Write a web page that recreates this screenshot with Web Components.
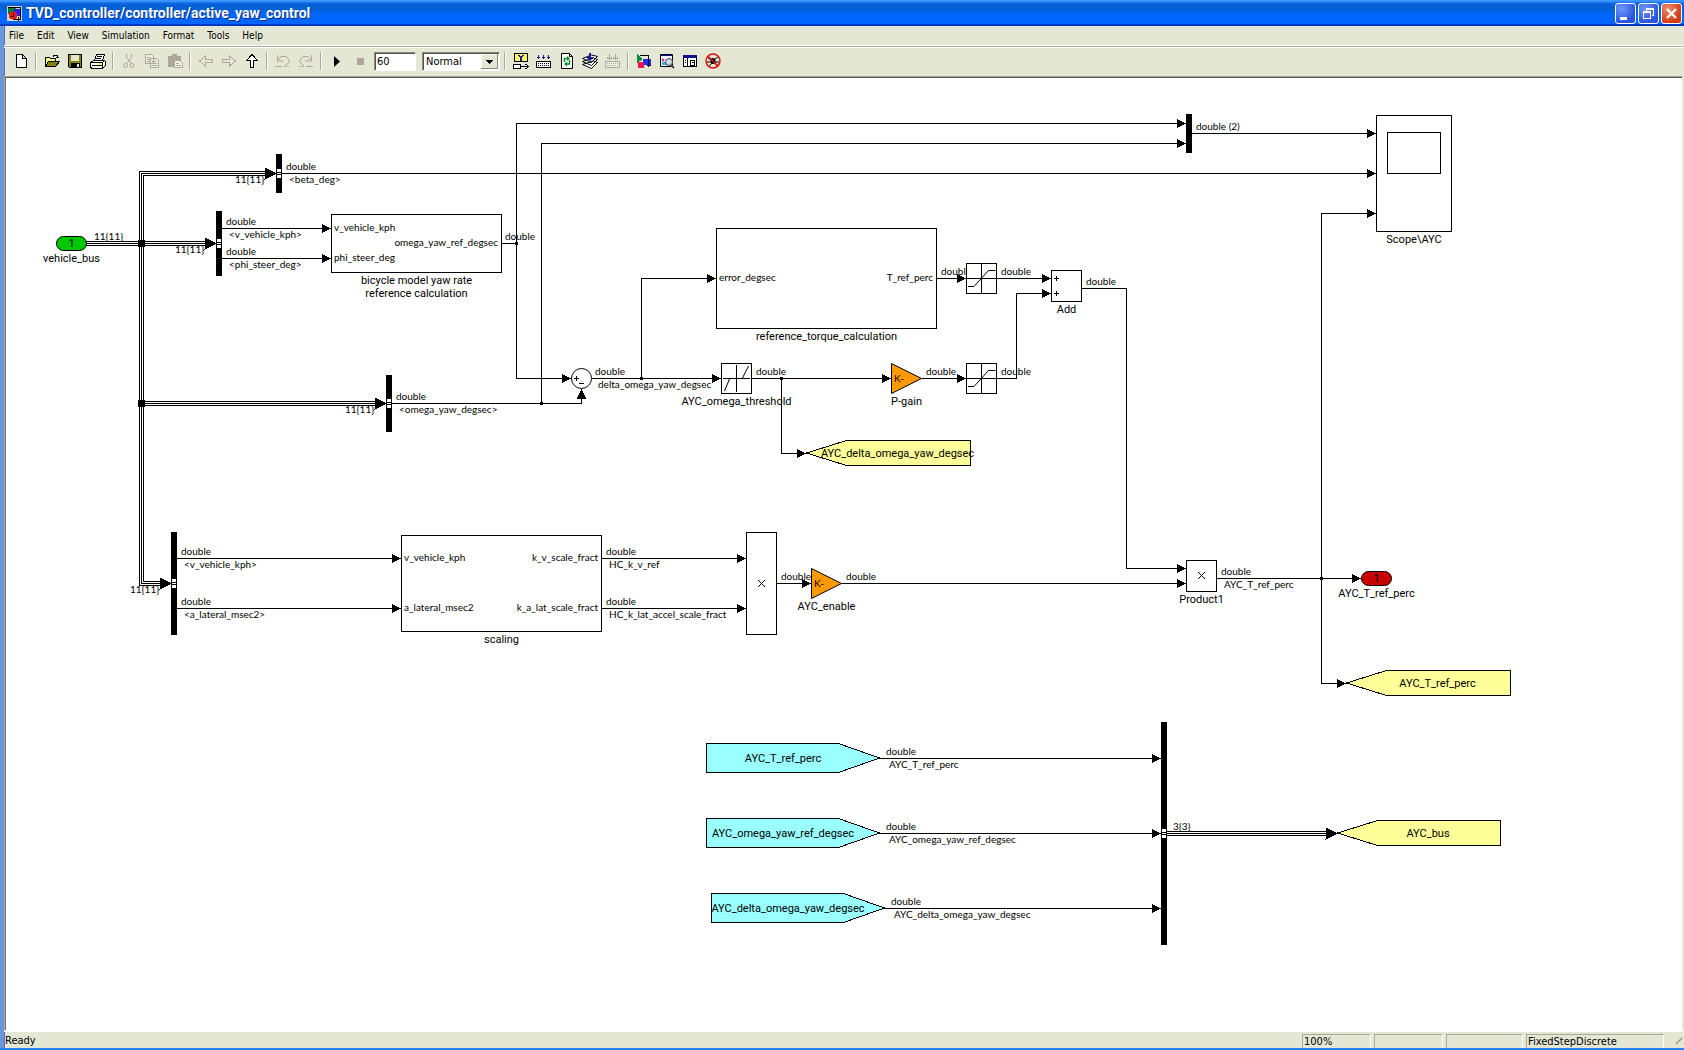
<!DOCTYPE html>
<html lang="en">
<head>
<meta charset="utf-8">
<title>TVD_controller/controller/active_yaw_control</title>
<style>
html, body { height: 100%; margin: 0; }
body { background: #e5e7d5; font-family: "DejaVu Sans Condensed", "DejaVu Sans", sans-serif; font-size: 10px; color: #000; overflow: hidden; }
</style>
</head>
<body>
<model-window>
  <title-bar slot="title">TVD_controller/controller/active_yaw_control</title-bar>
  <menu-bar slot="menu"></menu-bar>
  <tool-bar slot="tools"></tool-bar>
  <sim-canvas>
    <sim-wires></sim-wires>

    <sim-signal x="94" y="243" type="11{11}"></sim-signal>
    <sim-signal x="175" y="243" name="11{11}" flush></sim-signal>
    <sim-signal x="235" y="173" name="11{11}" flush></sim-signal>
    <sim-signal x="345" y="403" name="11{11}" flush></sim-signal>
    <sim-signal x="130" y="583" name="11{11}" flush></sim-signal>
    <sim-signal x="1173" y="833" type="3{3}"></sim-signal>
    <sim-signal x="286" y="173" type="double" name="&lt;beta_deg&gt;"></sim-signal>
    <sim-signal x="226" y="228" type="double" name="&lt;v_vehicle_kph&gt;"></sim-signal>
    <sim-signal x="226" y="258" type="double" name="&lt;phi_steer_deg&gt;"></sim-signal>
    <sim-signal x="505" y="243" type="double"></sim-signal>
    <sim-signal x="396" y="403" type="double" name="&lt;omega_yaw_degsec&gt;"></sim-signal>
    <sim-signal x="595" y="378" type="double" name="delta_omega_yaw_degsec"></sim-signal>
    <sim-signal x="941" y="278" type="double"></sim-signal>
    <sim-signal x="1001" y="278" type="double"></sim-signal>
    <sim-signal x="756" y="378" type="double"></sim-signal>
    <sim-signal x="926" y="378" type="double"></sim-signal>
    <sim-signal x="1001" y="378" type="double"></sim-signal>
    <sim-signal x="1086" y="288" type="double"></sim-signal>
    <sim-signal x="1196" y="133" type="double (2)"></sim-signal>
    <sim-signal x="181" y="558" type="double" name="&lt;v_vehicle_kph&gt;"></sim-signal>
    <sim-signal x="181" y="608" type="double" name="&lt;a_lateral_msec2&gt;"></sim-signal>
    <sim-signal x="606" y="558" type="double" name="HC_k_v_ref"></sim-signal>
    <sim-signal x="606" y="608" type="double" name="HC_k_lat_accel_scale_fract"></sim-signal>
    <sim-signal x="781" y="583" type="double"></sim-signal>
    <sim-signal x="846" y="583" type="double"></sim-signal>
    <sim-signal x="1221" y="578" type="double" name="AYC_T_ref_perc"></sim-signal>
    <sim-signal x="886" y="758" type="double" name="AYC_T_ref_perc"></sim-signal>
    <sim-signal x="886" y="833" type="double" name="AYC_omega_yaw_ref_degsec"></sim-signal>
    <sim-signal x="891" y="908" type="double" name="AYC_delta_omega_yaw_degsec"></sim-signal>

    <sim-block kind="inport" x="56" y="236" w="31" h="15" name="vehicle_bus">1</sim-block>
    <sim-block kind="outport" x="1361" y="571" w="31" h="15" name="AYC_T_ref_perc">1</sim-block>
    <sim-block kind="busbar" x="276" y="154" w="6" h="39" port="19"></sim-block>
    <sim-block kind="busbar" x="216" y="211" w="6" h="65" port="32"></sim-block>
    <sim-block kind="busbar" x="386" y="375" w="6" h="57" port="28"></sim-block>
    <sim-block kind="busbar" x="171" y="532" w="6" h="103" port="51"></sim-block>
    <sim-block kind="busbar" x="1186" y="114" w="6" h="39"></sim-block>
    <sim-block kind="busbar" x="1161" y="722" w="6" h="223" port="111"></sim-block>
    <sim-block kind="subsystem" x="331" y="214" w="171" h="59" name="bicycle model yaw rate|reference calculation">
      <sim-port y="14">v_vehicle_kph</sim-port><sim-port y="44">phi_steer_deg</sim-port><sim-port y="29" out>omega_yaw_ref_degsec</sim-port>
    </sim-block>
    <sim-block kind="subsystem" x="716" y="228" w="221" h="101" name="reference_torque_calculation">
      <sim-port y="50">error_degsec</sim-port><sim-port y="50" out>T_ref_perc</sim-port>
    </sim-block>
    <sim-block kind="subsystem" x="401" y="535" w="201" h="97" name="scaling">
      <sim-port y="23">v_vehicle_kph</sim-port><sim-port y="73">a_lateral_msec2</sim-port>
      <sim-port y="23" out>k_v_scale_fract</sim-port><sim-port y="73" out>k_a_lat_scale_fract</sim-port>
    </sim-block>
    <sim-block kind="sum" x="571" y="368" w="21" h="21"></sim-block>
    <sim-block kind="deadzone" x="721" y="363" w="31" h="31" name="AYC_omega_threshold"></sim-block>
    <sim-block kind="saturation" x="966" y="263" w="31" h="31"></sim-block>
    <sim-block kind="saturation" x="966" y="363" w="31" h="31"></sim-block>
    <sim-block kind="gain" x="891" y="363" w="31" h="31" name="P-gain">K-</sim-block>
    <sim-block kind="gain" x="811" y="568" w="31" h="31" name="AYC_enable">K-</sim-block>
    <sim-block kind="add" x="1051" y="270" w="31" h="32" name="Add"></sim-block>
    <sim-block kind="product" x="746" y="532" w="31" h="103"></sim-block>
    <sim-block kind="product" x="1186" y="560" w="31" h="32" name="Product1"></sim-block>
    <sim-block kind="scope" x="1376" y="115" w="76" h="117" name="Scope\AYC"></sim-block>
    <sim-block kind="goto" x="806" y="440" w="165" h="26">AYC_delta_omega_yaw_degsec</sim-block>
    <sim-block kind="goto" x="1346" y="670" w="165" h="26">AYC_T_ref_perc</sim-block>
    <sim-block kind="goto" x="1337" y="820" w="164" h="26">AYC_bus</sim-block>
    <sim-block kind="from" x="706" y="743" w="174" h="30">AYC_T_ref_perc</sim-block>
    <sim-block kind="from" x="706" y="818" w="174" h="30">AYC_omega_yaw_ref_degsec</sim-block>
    <sim-block kind="from" x="711" y="893" w="174" h="30">AYC_delta_omega_yaw_degsec</sim-block>
  </sim-canvas>
  <status-bar slot="status"></status-bar>
</model-window>

<script>
const define = (name, html, setup) => customElements.define(name, class extends HTMLElement {
  connectedCallback() {
    if (this.shadowRoot) return;
    const root = this.attachShadow({ mode: 'open' });
    root.innerHTML = html;
    if (setup) setup(this, root);
  }
});

define('model-window', `<style>
:host { display: flex; flex-direction: column; height: 100vh; box-sizing: border-box; border-bottom: 2px solid #2a80ee; background: #e5e7d5; }
.body { flex: 1; min-height: 0; display: flex; flex-direction: column; border-left: 4px solid #6699d8; box-shadow: inset 1px 0 #6a60d0; }
main { flex: 1; min-height: 0; display: flex; margin-right: 1px; border: 1px solid #aca899; border-right-color: #e5e7d5; border-bottom-color: #fff; }
::slotted(sim-canvas) { flex: 1; }
</style>
<slot name="title"></slot>
<div class="body">
<slot name="menu"></slot><slot name="tools"></slot>
<main><slot></slot></main>
<slot name="status"></slot></div>`);

define('title-bar', `<style>
:host { display: flex; align-items: center; height: 26px; box-sizing: border-box; padding: 0 2px 0 7px; gap: 4px; color: #fff;
 background: linear-gradient(#3a93ff 0 2px, #1673ee 2px 3px, #0a5fd8 4px, #0061d2 9px, #0066ff 14px 24px, #0038c4 24px); }
h1 { flex: 1; margin: 0; font: bold 14px/20px Roboto, sans-serif; text-shadow: 1px 1px #0a2a80; }
.icon { width: 15px; height: 15px; display: block; }
div { display: flex; gap: 2px; }
button { width: 21px; height: 21px; padding: 0; border: 1px solid #fff; border-radius: 3px; background: radial-gradient(circle at 30% 25%, #6f97f8, #2c55dd 70%); }
button.close { background: radial-gradient(circle at 30% 25%, #ee8d70, #d43c12 70%); }
button svg { display: block; width: 19px; height: 19px; }
</style>
<svg class="icon" viewBox="0 0 15 15" shape-rendering="crispEdges"><path fill="#d6d3c4" d="M0 0h15v15H0z"/><path fill="#0a7a2a" d="M1 1h6l4 4-3 3H1z"/><path fill="#2222e8" d="M7 3h6v7H7z"/><path stroke="#000" fill="none" d="M1 1.5h12.500v12M6 13.500h8M11.500 11v4"/><circle cx="6" cy="9.500" r="4" fill="#f01818"/><path stroke="#000" fill="none" d="M6.500 7v3H4"/></svg>
<h1><slot></slot></h1>
<div>
<button aria-label="Minimize"><svg viewBox="0 0 19 19"><path fill="#fff" d="M4 13h7v3H4z"/></svg></button>
<button aria-label="Restore"><svg viewBox="0 0 19 19" shape-rendering="crispEdges" fill="#fff"><path d="M4 7h8v8H4zM5 9v5h6v-5z" fill-rule="evenodd"/><path d="M7 4h8v8h-2V11h1V6H8v1H7z"/></svg></button>
<button class="close" aria-label="Close"><svg viewBox="0 0 19 19"><path stroke="#fff" stroke-width="2.400" d="M5 5l9 9M14 5l-9 9"/></svg></button>
</div>`);

define('menu-bar', `<style>
:host { display: block; height: 19px; border-bottom: 1px solid #fff; }
nav { display: flex; gap: 13px; padding: 0 5px; }
button { all: unset; font: 10px/19px "DejaVu Sans Condensed", "DejaVu Sans", sans-serif; }
</style><nav></nav>`, (el, root) => {
  root.querySelector('nav').innerHTML = ['File', 'Edit', 'View', 'Simulation', 'Format', 'Tools', 'Help'].map(t => `<button>${t}</button>`).join('');
});

const off = '#aca899';
const icons = {
  'New': '<path fill="#fff" stroke="#000" d="M3.500 1.500h6l4 4v9h-10zM9.500 1.500v4h4"/>',
  'Open': '<path fill="#ffff80" stroke="#000" d="M1.500 13.500v-9h4l1 1h5v3"/><path fill="#848400" stroke="#000" d="M1.500 13.500l3-5h11l-4 5z"/><path stroke="#000" fill="none" d="M9 3.500l1-1h3l1 2M12 4.500h3"/>',
  'Save': '<path fill="#848400" stroke="#000" d="M1.500 1.500h13v13h-12l-1-1z"/><path fill="#e5e7d5" d="M4 2h8v6H4z"/><path d="M4 10h9v5H4z"/><path fill="#e5e7d5" d="M10 11h2v3h-2z"/>',
  'Print': '<path fill="#fff" stroke="#000" d="M4.500 7.500l2-6h8l-2 6"/><path stroke="#000" d="M7 3.500h5M6 5.500h5"/><path fill="#fff" stroke="#000" d="M.5 9.500l3-2h11l1 1v4l-3 2.500H1.500l-1-1z"/><path stroke="#000" fill="none" d="M1 9.500h11v5M12 9.500l3-2M2 12.500h10"/><path fill="#ffff30" d="M8 10h3v2H8z"/>',
  'Cut': `<path stroke="${off}" fill="none" d="M5.500 1v3l5 7M10.500 1v3l-5 7"/><circle cx="4.500" cy="12.500" r="2" stroke="${off}" fill="none"/><circle cx="11" cy="12.500" r="2" stroke="${off}" fill="none"/>`,
  'Copy': `<path fill="#eeefe2" stroke="${off}" d="M1.500 1.500h6l2 2v7h-8zM6.500 5.500h6l2 2v7h-8z"/><path stroke="${off}" d="M3 4.500h3M3 6.500h3M3 8.500h3M8 8.500h4M8 10.500h5M8 12.500h5"/>`,
  'Paste': `<path fill="${off}" d="M1 3h4V1h5v2h4v11H1z"/><path fill="#f4f4ea" stroke="${off}" d="M7.500 7.500h5l3 3v4h-8z"/><path stroke="${off}" d="M9 10.500h3M9 12.500h5M4 4.500h7"/>`,
  'Back': `<path fill="none" stroke="${off}" d="M14.500 6.500H7.500V3L1.500 8l6 5V9.500h7z"/>`,
  'Forward': `<path fill="none" stroke="${off}" d="M1.500 6.500h7V3l6 5-6 5V9.500h-7z"/>`,
  'Up': '<path fill="#fff" stroke="#000" d="M6.500 14.500v-7h-4l5.500-6 5.500 6h-4v7z"/>',
  'Undo': `<path fill="none" stroke="${off}" d="M2.500 2v6h6M3 7.500l3-4h5l3 3v3l-4 3"/><path stroke="${off}" stroke-dasharray="2 1" d="M9 13.500h6"/><path stroke="${off}" d="M0 13.500h7"/>`,
  'Redo': `<path fill="none" stroke="${off}" d="M13.500 2v6h-6M13 7.500l-3-4H5l-3 3v3l4 3"/><path stroke="${off}" stroke-dasharray="2 1" d="M1 13.500h6"/><path stroke="${off}" d="M8 13.500h7"/>`,
  'Start': '<path d="M5 3l6 5.500L5 14z"/>',
  'Stop': `<path fill="${off}" d="M5 5h7v7H5z"/>`,
  'Highlight library': '<path fill="#ffff60" stroke="#000" d="M1.500.5h13v8h-13z"/><path fill="none" stroke="#1a1aa0" stroke-width="1.500" d="M5.500 2L8 4.500 10.500 2M8 4v4"/><path fill="#fff" stroke="#000" d="M.5 11.500h7v4h-7z"/><path stroke="#000" fill="none" d="M7 13.500h8M12.500 11l3 2.500-3 2.500"/>',
  'Build': '<path stroke="#1a1a90" fill="none" d="M2.500 2v4M7.500 2v4M12.500 2v4M1 4.500h3M6 4.500h3M11 4.500h3"/><path stroke="#000" fill="#fff" d="M.5 8.500h14v6H.5z"/><path stroke="#000" stroke-dasharray="1 1" d="M2 10.500h12M2 12.500h12"/>',
  'Refresh': '<path fill="#fff" stroke="#000" d="M2.500.5h8l3 3v12h-11zM10.500.5v3h3"/><path fill="none" stroke="#0a8a2a" stroke-width="1.500" d="M5.500 9V5.500H9M10.500 7v4H7"/><path fill="#0a8a2a" d="M8 3l3 2.500L8 8zM8 8.500L5 11l3 2.500z"/>',
  'Update diagram': '<path fill="#fff" stroke="#000" d="M.5 11.500l9 4 6-6-4-1.500zM.5 8.500l9 4 6-6-4-1.500zM.5 5.500l9 4 6-6-6-1.500z"/><path stroke="#1a1aa0" stroke-width="2" d="M8 0v5"/><path fill="#1a1aa0" d="M4 4h8L8 8z"/>',
  'Build subsystem': `<path stroke="${off}" fill="none" d="M4.500 1v5M10.500 1v5M2 4.500l2.500 2L7 4.500M8 4.500l2.500 2 2.500-2"/><path stroke="${off}" fill="#eeefe2" d="M.5 8.500h14v6H.5z"/><path stroke="${off}" stroke-dasharray="1 1" d="M2 10.500h12M2 12.500h12"/>`,
  'Library browser': '<path fill="#0a8a3a" d="M1 1l6 5-6 4z"/><path fill="#1a30ee" d="M7 6h8v6H7z"/><path stroke="#000" fill="none" d="M4 2.500h8.500v11M11 12.500h4"/><circle cx="5" cy="12" r="3.500" fill="#f0105a"/>',
  'Model explorer': '<path fill="#fff" stroke="#000" d="M1.500 1.500h12v12h-12z"/><path fill="#10108a" d="M2 2h11v1H2z"/><path fill="#d020b0" d="M3 5l3 2-3 2z"/><path fill="#20b8e0" d="M3 9h4v3H3z"/><circle cx="10" cy="9" r="3.500" fill="#c8dce0" stroke="#445"/><path stroke="#445" stroke-width="2" d="M12 12l3 3"/>',
  'Model browser': '<path fill="#fff" stroke="#000" d="M1.500 2.500h13v11h-13z"/><path fill="#10108a" d="M1 2h14v3H1z"/><path stroke="#000" fill="none" d="M5.500 5v8M3 7.500h1M3 9.500h1M8.500 7.500h4v5h-4zM10 9.500h3"/>',
  'Debug': '<path stroke="#000" fill="none" d="M3 5l3 2M13 4l-3 2M2 9h12M4 13l3-3M12 13l-2-3"/><ellipse cx="8" cy="8" rx="2.500" ry="3"/><circle cx="8" cy="8" r="7" fill="none" stroke="#e01010" stroke-width="1.500"/><path stroke="#e01010" stroke-width="1.500" d="M3 3l10 10"/>'
};
define('tool-button', `<style>
:host { display: block; }
button { all: unset; display: grid; place-items: center; width: 23px; height: 23px; }
svg { width: 16px; height: 16px; }
</style><button></button>`, (el, root) => {
  const b = root.querySelector('button'), n = el.getAttribute('icon');
  b.setAttribute('aria-label', n);
  const smooth = /Undo|Redo|Cut|Debug|Model explorer|Start|Update|Refresh/.test(n) ? 'auto' : 'crispEdges';
  b.innerHTML = `<svg viewBox="0 0 16 16" shape-rendering="${smooth}">${icons[n]}</svg>`;
});

define('tool-bar', `<style>
:host { display: flex; align-items: center; height: 30px; box-sizing: border-box; padding: 0 5px 1px; border-top: 1px solid #aca899; box-shadow: inset 0 1px #fff; }
i { width: 1px; height: 18px; margin: 0 4px 0 3px; background: #aca899; box-shadow: 1px 0 #fff; flex: none; box-sizing: border-box; }
input, .pick { box-sizing: border-box; height: 19px; border: 1px solid; border-color: #8a887a #fff #fff #8a887a; box-shadow: inset 1px 1px #55544c; background: #fff; }
input, select { font: 11px/15px "DejaVu Sans Condensed", "DejaVu Sans", sans-serif; color: #000; border-radius: 0; }
input { width: 42px; margin: 0 6px 0 3px; padding: 0 2px; outline: 0; }
.pick { display: grid; width: 78px; margin-right: 1px; padding: 1px; }
select { grid-area: 1/1; appearance: none; border: 0; background: none; padding: 0 2px; min-width: 0; outline: 0; }
.pick svg { grid-area: 1/1; justify-self: end; width: 17px; height: 15px; pointer-events: none; }
</style>`, (el, root) => {
  const group = names => names.map(n => `<tool-button icon="${n}"></tool-button>`).join('');
  root.innerHTML += [['New'], ['Open', 'Save', 'Print'], ['Cut', 'Copy', 'Paste'], ['Back', 'Forward', 'Up'], ['Undo', 'Redo'], ['Start', 'Stop']].map(group).join('<i></i>')
    + '<input aria-label="Stop time" value="60"><span class="pick"><select aria-label="Simulation mode"><option>Normal</option><option>Accelerator</option></select>'
    + '<svg viewBox="0 0 17 15" shape-rendering="crispEdges"><path fill="#e5e7d5" d="M0 0h17v15H0z"/><path fill="none" stroke="#8a887a" d="M0 14.500h16.500V0"/><path fill="none" stroke="#fff" d="M.5 14V.5H16"/><path d="M5 6h7L8.500 10z"/></svg></span><i></i>'
    + group(['Highlight library', 'Build', 'Refresh', 'Update diagram', 'Build subsystem']) + '<i></i>'
    + group(['Library browser', 'Model explorer', 'Model browser', 'Debug']);
});

define('status-bar', `<style>
:host { display: flex; gap: 3px; height: 17px; box-sizing: border-box; padding: 2px 0 0 1px; border-top: 1px solid #fff; font: 11px/14px "DejaVu Sans Condensed", "DejaVu Sans", sans-serif; }
:host > span { flex: 1; }
div { width: 69px; box-sizing: border-box; border: 1px solid; border-color: #aca899 #fff transparent #aca899; padding: 0 1px; line-height: 13px; }
.mid { width: 77px; } .solver { width: 138px; }
svg { width: 17px; height: 14px; }
</style><span>Ready</span><div>100%</div><div></div><div class="mid"></div><div class="solver">FixedStepDiscrete</div>
<svg viewBox="0 0 17 14"><path stroke="#aca899" stroke-width="2" d="M9 10l6-6"/></svg>`);

/* The model layer keeps window coordinates, so it is shifted by the canvas origin. */
define('sim-canvas', `<style>
:host { display: block; background: #fff; position: relative; overflow: hidden; border-top: 1px solid #55544c; border-left: 1px solid #77766c; }
div { position: absolute; left: -6px; top: -78px; width: 1684px; height: 1050px; }
</style><div><slot></slot></div>`);

define('sim-wires', `<style>
:host { position: absolute; inset: 0; }
svg { width: 100%; height: 100%; display: block; }
</style>`, (el, root) => {
  const wires = [
    '282,173 1376,173 >', '222,228 331,228 >', '222,258 331,258 >', '502,243 516,243',
    '1186,123 516,123 516,378 571,378', '1176,123 1186,123 >', '561,378 571,378 >',
    '541,403 541,143 1186,143 >', '392,403 581,403 581,389 ^', '592,378 721,378 >',
    '641,378 641,278 716,278 >', '937,278 966,278 >', '997,278 1051,278 >', '752,378 891,378 >',
    '781,378 781,453 806,453 >', '922,378 966,378 >', '997,378 1016,378 1016,293 1051,293 >',
    '1082,288 1126,288 1126,568 1186,568 >', '1192,133 1376,133 >', '1321,683 1321,213 1376,213 >',
    '1321,683 1346,683 >', '177,558 401,558 >', '177,608 401,608 >', '602,558 746,558 >', '602,608 746,608 >',
    '777,583 811,583 >', '842,583 1186,583 >', '1217,578 1361,578 >',
    '880,758 1161,758 >', '880,833 1161,833 >', '885,908 1161,908 >'
  ];
  const buses = ['86,243 216,243', '141,403 386,403', '1167,833 1337,833'];
  let s = '';
  for (const w of wires) {
    const p = w.split(' '), head = /[>^]/.test(w) ? p.pop() : '';
    const [x, y] = p[p.length - 1].split(',').map(Number);
    s += `<polyline points="${p.join(' ')}"/>`;
    if (head === '>') s += `<path class="f" d="M${x - 10} ${y - 4.5}L${x - .5} ${y}L${x - 10} ${y + 4.5}z"/>`;
    if (head === '^') s += `<path class="f" d="M${x - 4.5} ${y + 9}L${x} ${y - .5}L${x + 4.5} ${y + 9}z"/>`;
  }
  const big = (x, y) => `<path class="f" d="M${x - 12} ${y - 6}L${x + .5} ${y}L${x - 12} ${y + 6}z"/>`;
  for (const b of buses) {
    const [[x1, y], [x2]] = b.split(' ').map(v => v.split(',').map(Number));
    for (const d of [-2, 0, 2]) s += `<path d="M${x1} ${y + d}H${x2 - 10}"/>`;
    s += big(x2, y);
  }
  for (const d of [-2, 0, 2]) s += `<path d="M266 ${173 + d}H${141 + d}V${583 - d}H161"/>`;
  s += big(276, 173) + big(171, 583);
  for (const y of [243, 403]) s += `<rect class="f" x="137.500" y="${y - 3.5}" width="7" height="7"/>`;
  for (const [x, y] of [[516, 243], [541, 403], [641, 378], [781, 378], [1321, 578]]) s += `<rect class="f" x="${x - 1.5}" y="${y - 1.5}" width="3" height="3"/>`;
  root.innerHTML += `<svg shape-rendering="crispEdges"><style>polyline,path{fill:none;stroke:#000;stroke-linecap:square}.f{fill:#000;stroke:none}</style><g transform="translate(.5 .5)">${s}</g></svg>`;
});

define('sim-signal', `<style>
:host { position: absolute; font: 10px/13px Lato, "Liberation Sans", sans-serif; white-space: nowrap; }
div { height: 13px; }
.name { padding-left: 3px; }
:host([flush]) .name { padding-left: 0; }
</style><div class="type"></div><div class="name"></div>`, (el, root) => {
  el.style.left = el.getAttribute('x') + 'px';
  el.style.top = el.getAttribute('y') - 13 + 'px';
  root.querySelector('.type').textContent = el.getAttribute('type') || '';
  root.querySelector('.name').textContent = el.getAttribute('name') || '';
});

define('sim-port', `<style>
:host { position: absolute; left: 3px; font: 10px/13px Lato, "Liberation Sans", sans-serif; white-space: nowrap; }
:host([out]) { left: auto; right: 4px; }
</style><slot></slot>`, el => { el.style.top = el.getAttribute('y') - 7 + 'px'; });

const frame = (w, h) => `<rect x=".5" y=".5" width="${w - 1}" height="${h - 1}" fill="#fff"/>`;
const plus = (x, y) => `<path d="M${x - 2} ${y + .5}h5M${x + .5} ${y - 2}v5"/>`;
const shapes = {
  inport: (w, h) => `<rect shape-rendering="auto" x=".5" y=".5" width="${w - 1}" height="${h - 1}" rx="7" fill="#00c800"/>`,
  outport: (w, h) => `<rect shape-rendering="auto" x=".5" y=".5" width="${w - 1}" height="${h - 1}" rx="7" fill="#c80000"/>`,
  busbar: (w, h, p) => `<rect stroke="none" width="${w}" height="${h}" fill="#000"/>` + (p ? `<rect stroke="none" x="1" y="${p - 4}" width="4" height="9" fill="#fff"/><path d="M1 ${p - .5}h4M1 ${+p + 1.5}h4"/>` : ''),
  subsystem: frame,
  sum: () => `<circle shape-rendering="auto" cx="10.500" cy="10.500" r="10" fill="#fff"/>` + plus(5, 10) + '<path d="M8 15.500h5"/>',
  deadzone: (w, h) => frame(w, h) + '<path d="M2 15.500h27M15.500 2v27"/><path shape-rendering="auto" d="M3.500 28l5-12M21.500 15l6-12"/>',
  saturation: (w, h) => frame(w, h) + '<path d="M0 15.500h31M15.500 0v31"/><path shape-rendering="auto" d="M2 23.500h6L22.500 7.500h7"/>',
  gain: () => '<path shape-rendering="auto" fill="#ff9900" d="M.5.5L30.500 15.500L.5 30.500z"/>',
  add: (w, h) => frame(w, h) + plus(5, 8) + plus(5, 23),
  product: (w, h) => { const c = h > 60 ? 51 : 15; return frame(w, h) + `<path shape-rendering="auto" d="M12 ${c - 3}l7 7M19 ${c - 3}l-7 7"/>`; },
  scope: (w, h) => frame(w, h) + '<rect x="11.500" y="17.500" width="53" height="41" fill="none"/>',
  goto: (w, h) => `<path fill="#ffff99" d="M.5 13L40.500.5H${w - .5}V${h - .5}H40.500z"/>`,
  from: (w, h) => `<path fill="#99ffff" d="M.5.5H132.500L${w - .5} 15L132.500 ${h - .5}H.5z"/>`
};
define('sim-block', `<style>
:host { position: absolute; display: flex; flex-direction: column; align-items: center; font: 11px/13px Roboto, sans-serif; white-space: nowrap; }
.shape { position: relative; display: grid; }
.shape > * { grid-area: 1/1; }
svg { display: block; stroke: #000; fill: none; }
.text { position: relative; display: flex; align-items: center; justify-content: center; }
:host([kind=subsystem]) .text { display: block; }
:host([kind=goto]) .text { padding-left: 18px; }
:host([kind=from]) .text { padding-right: 20px; }
:host([kind=gain]) .text { justify-content: flex-start; padding-left: 3px; font: 10px/13px Lato, "Liberation Sans", sans-serif; }
.name { width: 0; display: flex; flex-direction: column; align-items: center; padding-top: 1px; }
</style><div class="shape"><svg shape-rendering="crispEdges"></svg><div class="text"><slot></slot></div></div><div class="name"></div>`, (el, root) => {
  const g = n => el.getAttribute(n), w = +g('w'), h = +g('h'), svg = root.querySelector('svg');
  el.style.cssText = `left:${g('x')}px;top:${g('y')}px;width:${w}px`;
  svg.setAttribute('width', w); svg.setAttribute('height', h);
  svg.innerHTML = shapes[g('kind')](w, h, g('port'));
  const box = root.querySelector('.shape');
  box.style.width = w + 'px'; box.style.height = h + 'px';
  const text = root.querySelector('.text');
  text.style.boxSizing = 'border-box'; text.style.width = w + 'px'; text.style.height = h + 'px';
  for (const line of (g('name') || '').split('|')) {
    const s = document.createElement('span'); s.textContent = line; root.querySelector('.name').append(s);
  }
});
</script>
</body>
</html>
